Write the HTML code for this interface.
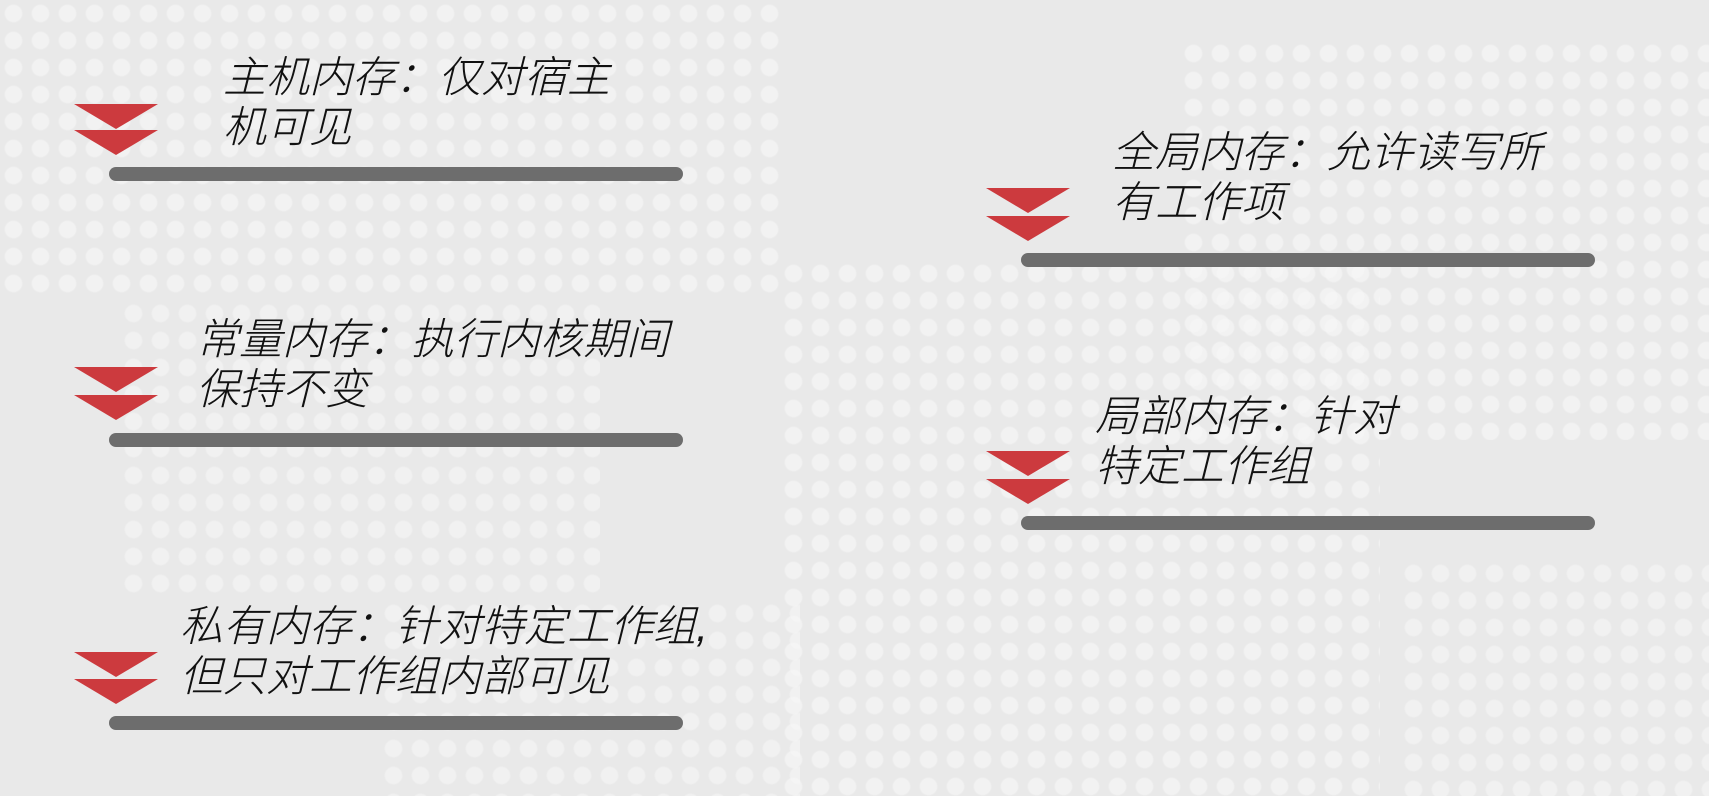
<!DOCTYPE html>
<html><head><meta charset="utf-8"><style>
html,body{margin:0;padding:0}
body{width:1709px;height:796px;position:relative;overflow:hidden;background:#e9e9e9;font-family:"Liberation Sans","Noto Sans CJK SC",sans-serif}
.dots{position:absolute;background-image:radial-gradient(circle,#f7f7f7 8px,rgba(247,247,247,0) 9.5px);background-size:27px 27px}
.t{position:absolute;font-size:43px;font-style:italic;color:#111;line-height:50px;white-space:nowrap;font-weight:300}
.bar{position:absolute;height:14px;border-radius:7px;background:#6d6d6d}
.tri{position:absolute;width:0;height:0;border-left:42px solid transparent;border-right:42px solid transparent;border-top:25px solid #cc3a3e}
</style></head><body>
<div class="dots" style="left:0;top:0;width:780px;height:300px;opacity:.65"></div>
<div class="dots" style="left:120px;top:300px;width:480px;height:300px;opacity:.55"></div>
<div class="dots" style="left:380px;top:600px;width:420px;height:196px;opacity:.55"></div>
<div class="dots" style="left:780px;top:260px;width:600px;height:536px;opacity:.65"></div>
<div class="dots" style="left:1180px;top:40px;width:529px;height:400px;opacity:.65"></div>
<div class="dots" style="left:1400px;top:560px;width:309px;height:236px;opacity:.55"></div>

<div class="tri" style="left:74px;top:104px"></div><div class="tri" style="left:74px;top:130px"></div>
<div class="t" style="left:223px;top:53px">主机内存：仅对宿主<br>机可见</div>
<div class="bar" style="left:109px;top:167px;width:574px"></div>

<div class="tri" style="left:74px;top:367px"></div><div class="tri" style="left:74px;top:395px"></div>
<div class="t" style="left:196px;top:315px">常量内存：执行内核期间<br>保持不变</div>
<div class="bar" style="left:109px;top:433px;width:574px"></div>

<div class="tri" style="left:74px;top:652px"></div><div class="tri" style="left:74px;top:679px"></div>
<div class="t" style="left:180px;top:602px">私有内存：针对特定工作组,<br>但只对工作组内部可见</div>
<div class="bar" style="left:109px;top:716px;width:574px"></div>

<div class="tri" style="left:986px;top:188px"></div><div class="tri" style="left:986px;top:216px"></div>
<div class="t" style="left:1112px;top:128px">全局内存：允许读写所<br>有工作项</div>
<div class="bar" style="left:1021px;top:253px;width:574px"></div>

<div class="tri" style="left:986px;top:451px"></div><div class="tri" style="left:986px;top:479px"></div>
<div class="t" style="left:1095px;top:392px">局部内存：针对<br>特定工作组</div>
<div class="bar" style="left:1021px;top:516px;width:574px"></div>
</body></html>
